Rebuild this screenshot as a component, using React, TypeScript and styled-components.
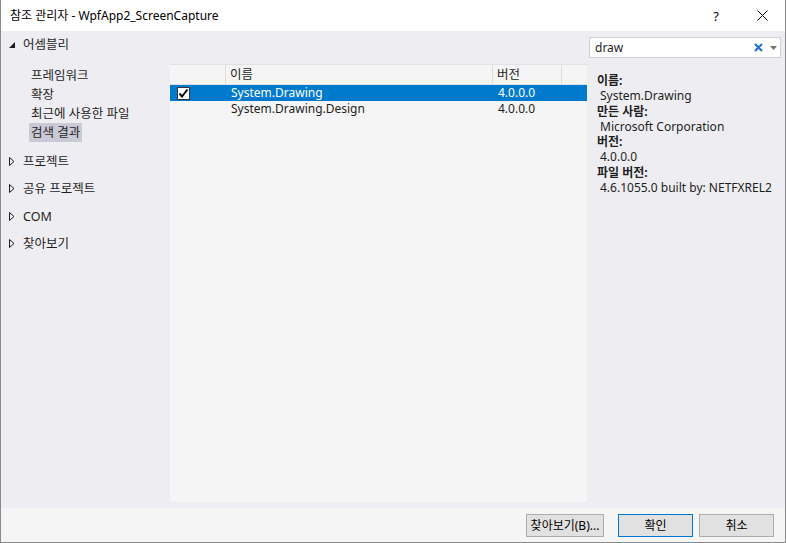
import React from "react";
import styled, { createGlobalStyle } from "styled-components";

const Global = createGlobalStyle`
  html, body { margin: 0; padding: 0; background: #ffffff; }
  body { font-family: "Noto Sans", "Noto Sans CJK KR", sans-serif; font-size: 12px; color: #1e1e1e; }
  * { box-sizing: border-box; }
`;

const Window = styled.div`
  width: 786px;
  height: 543px;
  display: flex;
  flex-direction: column;
  border: 1px solid #8a8a8a;
  border-top: none;
  background: #eeeef2;
  overflow: hidden;
`;

const TitleBar = styled.div`
  height: 31px;
  flex: none;
  background: #ffffff;
  display: flex;
  align-items: center;
  padding-left: 9px;
`;

const TitleText = styled.div`
  flex: 1;
  font-size: 12px;
  line-height: 16px;
  color: #000;
`;

const TitleButton = styled.div<{ $w: number }>`
  width: ${(p) => p.$w}px;
  height: 30px;
  display: flex;
  align-items: center;
  justify-content: center;
  color: #000;
  font-size: 13px;
`;

const Body = styled.div`
  flex: 1;
  display: flex;
  min-height: 0;
`;

const Nav = styled.div`
  width: 169px;
  flex: none;
  padding-top: 5px;
  display: flex;
  flex-direction: column;
`;

const NavHead = styled.div<{ $mt: number }>`
  height: 17px;
  margin-top: ${(p) => p.$mt}px;
  display: flex;
  align-items: center;
  line-height: 16px;
  font-size: 12.5px;
`;

const Arrow = styled.div`
  width: 22px;
  padding-left: 8px;
  display: flex;
  align-items: center;
`;

const SubList = styled.div`
  display: flex;
  flex-direction: column;
  padding-top: 13px;
  padding-left: 28px;
`;

const SubItem = styled.div<{ $sel?: boolean }>`
  align-self: flex-start;
  height: 19px;
  line-height: 19px;
  font-size: 12.5px;
  padding: 0 2px 0 2px;
  background: ${(p) => (p.$sel ? "#c9cad6" : "transparent")};
`;

const Middle = styled.div`
  width: 417px;
  flex: none;
  margin-top: 33px;
  margin-bottom: 6px;
  background: #f5f5f5;
  display: flex;
  flex-direction: column;
`;

const HeaderRow = styled.div`
  height: 21px;
  display: grid;
  grid-template-columns: 56px 267px 69px 24px;
  border-top: 1px solid #e2e2e6;
  border-bottom: 1px solid #e2e2e6;
`;

const HeadCell = styled.div<{ $last?: boolean }>`
  border-right: ${(p) => (p.$last ? "none" : "1px solid #dcdce0")};
  padding-left: 4px;
  line-height: 19px;
  font-size: 12.5px;
  color: #1e1e1e;
`;

const Row = styled.div<{ $sel?: boolean }>`
  height: 16px;
  display: grid;
  grid-template-columns: 57px 267px 93px;
  align-items: center;
  background: ${(p) => (p.$sel ? "#007acc" : "transparent")};
  color: ${(p) => (p.$sel ? "#ffffff" : "#1e1e1e")};
  line-height: 16px;
`;

const Cell = styled.div`
  padding-left: 4px;
  white-space: nowrap;
`;

const CheckCell = styled.div`
  padding-left: 7px;
  display: flex;
  align-items: center;
`;

const CheckBox = styled.div`
  width: 13px;
  height: 13px;
  background: #ffffff;
  border: 1px solid #333333;
  display: flex;
  align-items: center;
  justify-content: center;
`;

const Right = styled.div`
  flex: 1;
  display: flex;
  flex-direction: column;
  padding-left: 2px;
  padding-right: 4px;
`;

const Search = styled.div`
  margin-top: 6px;
  height: 21px;
  background: #ffffff;
  border: 1px solid #cccedb;
  display: flex;
  align-items: center;
  padding-left: 5px;
  padding-right: 3px;
`;

const SearchText = styled.div`
  flex: 1;
  line-height: 16px;
  color: #1e1e1e;
`;

const Spacer = styled.span`
  width: 7px;
`;

const Details = styled.div`
  padding-top: 15px;
  padding-left: 8px;
  display: flex;
  flex-direction: column;
`;

const Label = styled.div`
  font-weight: bold;
  line-height: 15.3px;
  height: 15.3px;
`;

const Value = styled.div`
  padding-left: 3px;
  line-height: 15.3px;
  height: 15.3px;
  white-space: nowrap;
`;

const Footer = styled.div`
  height: 34px;
  flex: none;
  background: #f5f5f5;
  display: flex;
  align-items: flex-start;
  justify-content: flex-end;
  padding-top: 6px;
  padding-right: 11px;
`;

const Button = styled.button<{ $w: number; $ml: number; $def?: boolean }>`
  width: ${(p) => p.$w}px;
  height: 23px;
  margin-left: ${(p) => p.$ml}px;
  background: #e1e1e1;
  border: 1px solid ${(p) => (p.$def ? "#0078d7" : "#adadad")};
  font-family: inherit;
  font-size: 12px;
  color: #000;
  padding: 0;
  line-height: 20px;
`;

const DownFilled = () => (
  <svg width="6" height="6" viewBox="0 0 6 6">
    <polygon points="6,0 6,6 0,6" fill="#1e1e1e" />
  </svg>
);

const RightOutline = () => (
  <svg width="6" height="9" viewBox="0 0 6 9">
    <polygon points="0.5,0.5 5,4.5 0.5,8.5" fill="none" stroke="#1e1e1e" strokeWidth="1" />
  </svg>
);

const Check = () => (
  <svg width="11" height="11" viewBox="0 0 11 11">
    <polyline points="1.5,5.5 4,8.5 9.5,1.5" fill="none" stroke="#000" strokeWidth="2" />
  </svg>
);

const Close = () => (
  <svg width="11" height="11" viewBox="0 0 11 11">
    <path d="M0.5 0.5 L10.5 10.5 M10.5 0.5 L0.5 10.5" stroke="#000" strokeWidth="1" />
  </svg>
);

const ClearX = () => (
  <svg width="9" height="9" viewBox="0 0 9 9">
    <path d="M1 1 L8 8 M8 1 L1 8" stroke="#1e6fc7" strokeWidth="2" />
  </svg>
);

const Caret = () => (
  <svg width="7" height="4" viewBox="0 0 7 4">
    <polygon points="0,0 7,0 3.5,4" fill="#717171" />
  </svg>
);

export default function App() {
  return (
    <>
      <Global />
      <Window>
        <TitleBar>
          <TitleText>참조 관리자 - WpfApp2_ScreenCapture</TitleText>
          <TitleButton $w={46}>?</TitleButton>
          <TitleButton $w={46}>
            <Close />
          </TitleButton>
        </TitleBar>
        <Body>
          <Nav>
            <NavHead $mt={0}>
              <Arrow>
                <DownFilled />
              </Arrow>
              어셈블리
            </NavHead>
            <SubList>
              <SubItem>프레임워크</SubItem>
              <SubItem>확장</SubItem>
              <SubItem>최근에 사용한 파일</SubItem>
              <SubItem $sel>검색 결과</SubItem>
            </SubList>
            <NavHead $mt={11}>
              <Arrow>
                <RightOutline />
              </Arrow>
              프로젝트
            </NavHead>
            <NavHead $mt={10}>
              <Arrow>
                <RightOutline />
              </Arrow>
              공유 프로젝트
            </NavHead>
            <NavHead $mt={11}>
              <Arrow>
                <RightOutline />
              </Arrow>
              COM
            </NavHead>
            <NavHead $mt={10}>
              <Arrow>
                <RightOutline />
              </Arrow>
              찾아보기
            </NavHead>
          </Nav>
          <Middle>
            <HeaderRow>
              <HeadCell />
              <HeadCell>이름</HeadCell>
              <HeadCell>버전</HeadCell>
              <HeadCell $last />
            </HeaderRow>
            <Row $sel>
              <CheckCell>
                <CheckBox>
                  <Check />
                </CheckBox>
              </CheckCell>
              <Cell>System.Drawing</Cell>
              <Cell>4.0.0.0</Cell>
            </Row>
            <Row>
              <CheckCell />
              <Cell>System.Drawing.Design</Cell>
              <Cell>4.0.0.0</Cell>
            </Row>
          </Middle>
          <Right>
            <Search>
              <SearchText>draw</SearchText>
              <ClearX />
              <Spacer />
              <Caret />
            </Search>
            <Details>
              <Label>이름:</Label>
              <Value>System.Drawing</Value>
              <Label>만든 사람:</Label>
              <Value>Microsoft Corporation</Value>
              <Label>버전:</Label>
              <Value>4.0.0.0</Value>
              <Label>파일 버전:</Label>
              <Value>4.6.1055.0 built by: NETFXREL2</Value>
            </Details>
          </Right>
        </Body>
        <Footer>
          <Button $w={78} $ml={0}>찾아보기(B)...</Button>
          <Button $w={75} $ml={14} $def>확인</Button>
          <Button $w={75} $ml={6}>취소</Button>
        </Footer>
      </Window>
    </>
  );
}
